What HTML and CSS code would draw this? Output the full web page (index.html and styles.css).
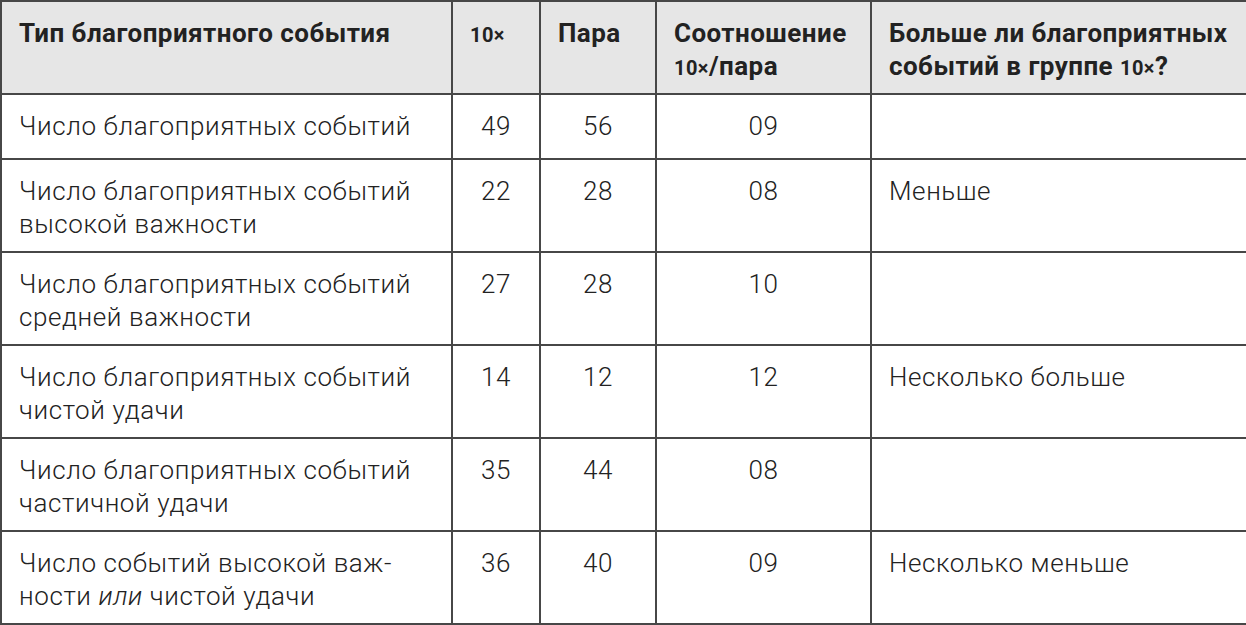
FILE: index.html
```html
<!DOCTYPE html>
<html lang="ru">
<head>
<meta charset="utf-8">
<link rel="stylesheet" href="styles.css">
</head>
<body>
<table class="tbl">
  <colgroup>
    <col class="c1"><col class="c2"><col class="c3"><col class="c4"><col class="c5">
  </colgroup>
  <thead>
    <tr class="hrow">
      <th>Тип благоприятного события</th>
      <th><span class="sm">10×</span></th>
      <th>Пара</th>
      <th>Соотношение<br><span class="sm">10×</span>/пара</th>
      <th>Больше ли благоприятных<br>событий в группе <span class="sm">10×</span>?</th>
    </tr>
  </thead>
  <tbody>
    <tr class="r1">
      <td>Число благоприятных событий</td><td class="num">49</td><td class="num">56</td><td class="num">09</td><td></td>
    </tr>
    <tr class="r2">
      <td>Число благоприятных событий<br>высокой важности</td><td class="num">22</td><td class="num">28</td><td class="num">08</td><td>Меньше</td>
    </tr>
    <tr class="r2">
      <td>Число благоприятных событий<br>средней важности</td><td class="num">27</td><td class="num">28</td><td class="num">10</td><td></td>
    </tr>
    <tr class="r2">
      <td>Число благоприятных событий<br>чистой удачи</td><td class="num">14</td><td class="num">12</td><td class="num">12</td><td>Несколько больше</td>
    </tr>
    <tr class="r2">
      <td>Число благоприятных событий<br>частичной удачи</td><td class="num">35</td><td class="num">44</td><td class="num">08</td><td></td>
    </tr>
    <tr class="r2">
      <td>Число событий высокой важ-<br>ности <em>или</em> чистой удачи</td><td class="num">36</td><td class="num">40</td><td class="num">09</td><td>Несколько меньше</td>
    </tr>
  </tbody>
</table>
</body>
</html>
```
FILE: styles.css
```css
html, body {
  margin: 0;
  padding: 0;
  background: #ffffff;
}
.tbl {
  border-collapse: collapse;
  table-layout: fixed;
  width: 1246px;
  font-family: Roboto, "Liberation Sans", sans-serif;
  color: #222222;
}
.c1 { width: 451px; }
.c2 { width: 88px; }
.c3 { width: 116px; }
.c4 { width: 215px; }
.c5 { width: 376px; }
.tbl th, .tbl td {
  border: 2px solid #474747;
  vertical-align: top;
  text-align: left;
  padding: 15px 0 0 17px;
  font-size: 26px;
  line-height: 33px;
  white-space: nowrap;
  overflow: hidden;
  box-sizing: border-box;
}
.tbl th {
  background: #e6e6e6;
  font-weight: 700;
  letter-spacing: 0.45px;
}
.tbl td {
  font-weight: 300;
  letter-spacing: 0.6px;
}
.hrow { height: 93px; }
.r1 { height: 65px; }
.r2 { height: 93px; }
.tbl td.num {
  text-align: center;
  padding-left: 0;
}
.sm {
  font-size: 20px;
}
em {
  font-style: italic;
}
```
